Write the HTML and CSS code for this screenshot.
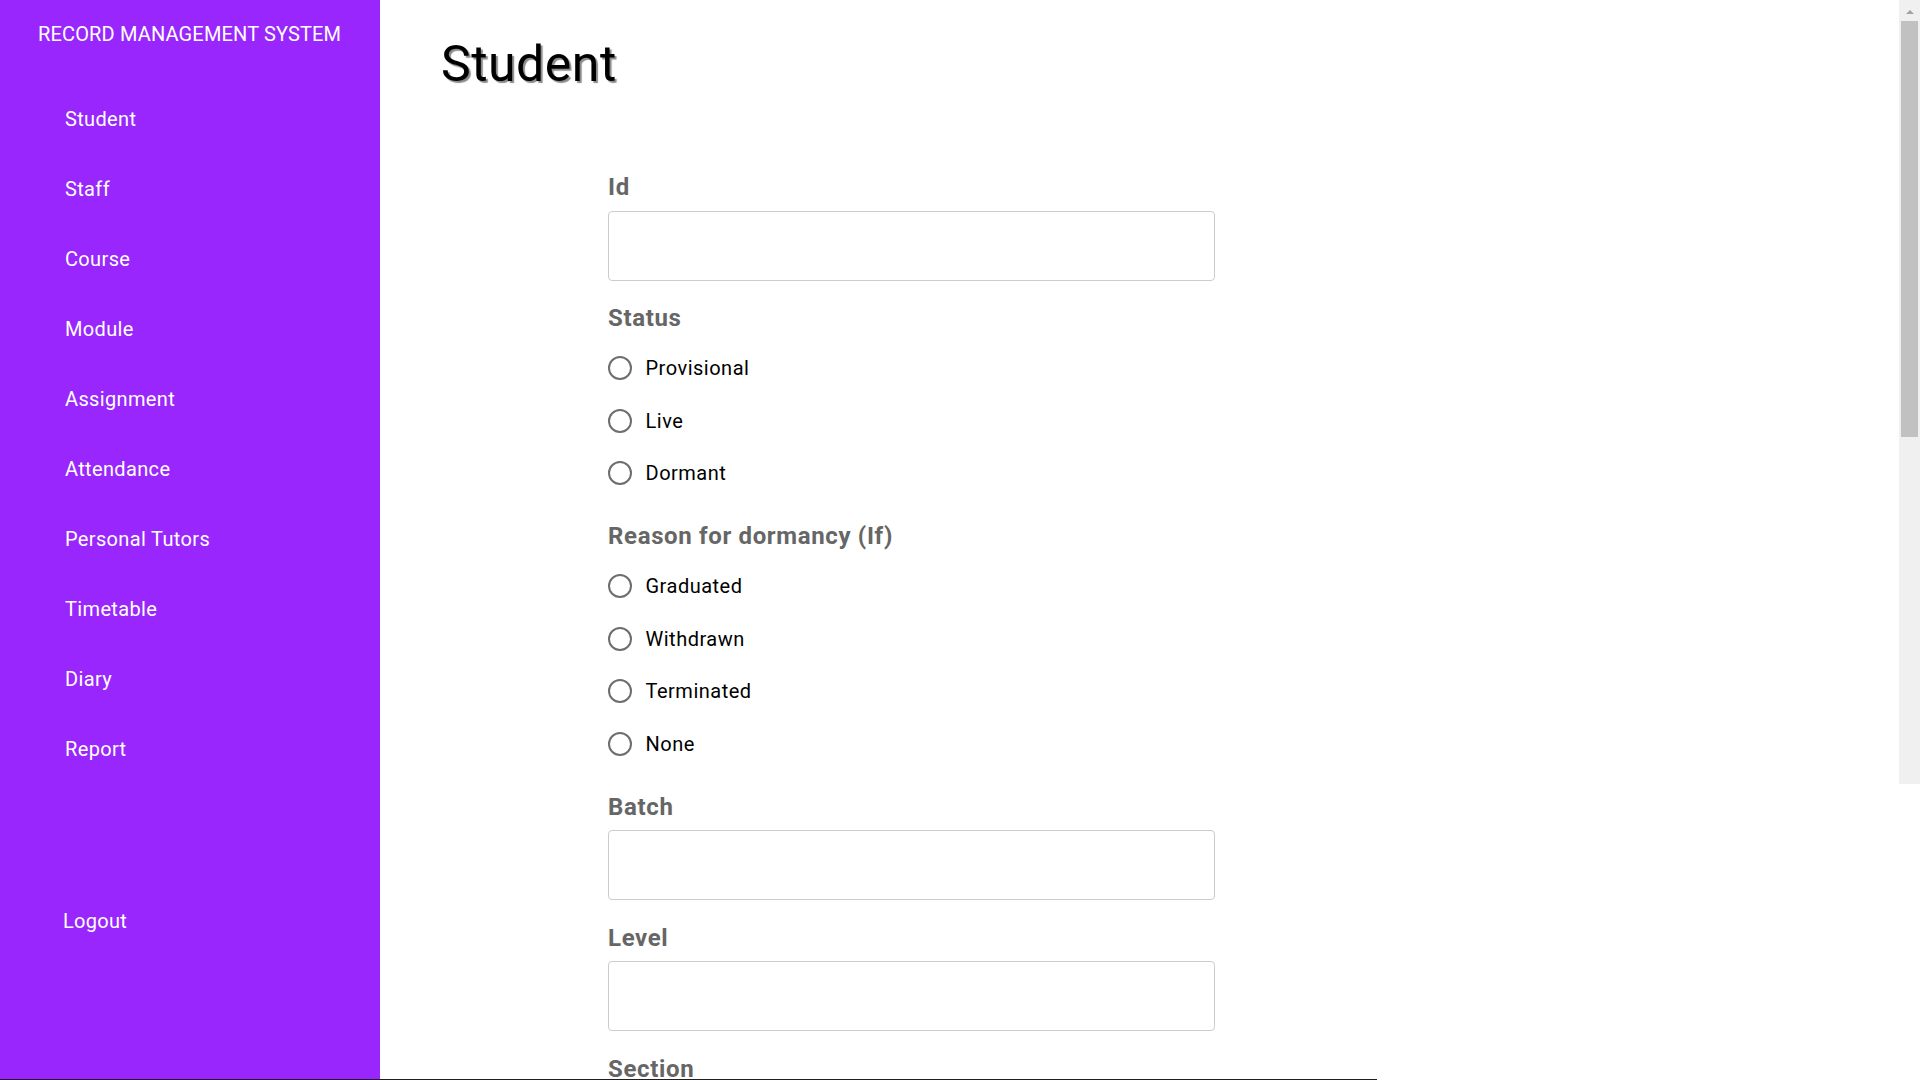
FILE: index.html
```html
<!DOCTYPE html>
<html lang="en">
<head>
<meta charset="utf-8">
<title>Record Management System - Student</title>
<link rel="stylesheet" href="styles.css">
</head>
<body>
<aside class="sidebar">
  <div class="brand">RECORD MANAGEMENT SYSTEM</div>
  <nav class="nav">
    <a class="nav-item" href="#">Student</a>
    <a class="nav-item" href="#">Staff</a>
    <a class="nav-item" href="#">Course</a>
    <a class="nav-item" href="#">Module</a>
    <a class="nav-item" href="#">Assignment</a>
    <a class="nav-item" href="#">Attendance</a>
    <a class="nav-item" href="#">Personal Tutors</a>
    <a class="nav-item" href="#">Timetable</a>
    <a class="nav-item" href="#">Diary</a>
    <a class="nav-item" href="#">Report</a>
  </nav>
  <a class="logout" href="#">Logout</a>
</aside>
<main class="main">
  <h1 class="page-title">Student</h1>
  <form class="form">
    <label class="field-label" for="sid">Id</label>
    <input class="text-input" id="sid" type="text">

    <div class="field-label">Status</div>
    <div class="radios">
      <label class="radio-row"><input class="radio" type="radio" name="status"><span class="radio-text">Provisional</span></label>
      <label class="radio-row"><input class="radio" type="radio" name="status"><span class="radio-text">Live</span></label>
      <label class="radio-row"><input class="radio" type="radio" name="status"><span class="radio-text">Dormant</span></label>
    </div>

    <div class="field-label">Reason for dormancy (If)</div>
    <div class="radios">
      <label class="radio-row"><input class="radio" type="radio" name="reason"><span class="radio-text">Graduated</span></label>
      <label class="radio-row"><input class="radio" type="radio" name="reason"><span class="radio-text">Withdrawn</span></label>
      <label class="radio-row"><input class="radio" type="radio" name="reason"><span class="radio-text">Terminated</span></label>
      <label class="radio-row"><input class="radio" type="radio" name="reason"><span class="radio-text">None</span></label>
    </div>

    <label class="field-label" for="batch">Batch</label>
    <input class="text-input" id="batch" type="text">

    <label class="field-label" for="level">Level</label>
    <input class="text-input" id="level" type="text">

    <label class="field-label" for="section">Section</label>
    <input class="text-input" id="section" type="text">
  </form>
</main>
<div class="scrollbar">
  <div class="scroll-arrow"></div>
  <div class="scroll-thumb"></div>
</div>
<div class="bottom-line"></div>
</body>
</html>
```

FILE: styles.css
```css
* { box-sizing: border-box; }

html, body {
  margin: 0;
  padding: 0;
  height: 100%;
}

body {
  display: flex;
  align-items: flex-start;
  overflow: hidden;
  background: #ffffff;
  font-family: Roboto, "Noto Sans", Arial, sans-serif;
  position: relative;
}

.sidebar {
  flex: 0 0 380px;
  width: 380px;
  height: 1079px;
  background: #9926fc;
  color: #ffffff;
  display: flex;
  flex-direction: column;
  padding-top: 20px;
}

.brand {
  font-size: 20px;
  line-height: 28px;
  padding-left: 38px;
  letter-spacing: 0.15px;
  white-space: nowrap;
}

.nav {
  display: flex;
  flex-direction: column;
  margin-top: 36px;
}

.nav-item {
  display: block;
  color: #ffffff;
  text-decoration: none;
  font-size: 20px;
  line-height: 70px;
  height: 70px;
  padding-left: 65px;
  letter-spacing: 0.35px;
}

.logout {
  display: block;
  color: #ffffff;
  text-decoration: none;
  font-size: 20px;
  line-height: 70px;
  height: 70px;
  padding-left: 63px;
  margin-top: 102px;
  letter-spacing: 0.3px;
}

.main {
  flex: 1;
  padding: 34px 0 0 61px;
}

.page-title {
  margin: 0;
  font-size: 50px;
  font-weight: 400;
  line-height: 60px;
  color: #000000;
  letter-spacing: 0.5px;
  text-shadow: 2px 2px 1px #8a8a8a;
}

.form {
  margin: 79px 0 0 167px;
  width: 606px;
  display: flex;
  flex-direction: column;
}

.field-label {
  display: block;
  font-size: 24px;
  font-weight: 700;
  line-height: 28px;
  color: #666666;
  letter-spacing: 0.65px;
  margin-bottom: 9.5px;
}

.text-input {
  display: block;
  width: 607px;
  height: 70px;
  border: 1px solid #cccccc;
  border-radius: 4px;
  background: #ffffff;
  margin: 0 0 23.5px 0;
  font-size: 20px;
  padding: 0 12px;
}

.radios {
  display: flex;
  flex-direction: column;
  margin: 0.5px 0 23.5px 0;
}

.radios + .field-label {
  margin-top: -1px;
}

.radio-row {
  display: flex;
  align-items: center;
  height: 52.5px;
}

.radio {
  appearance: none;
  -webkit-appearance: none;
  width: 24px;
  height: 24px;
  margin: 0 13.5px 0 0;
  border: 2px solid #6e6e6e;
  border-radius: 50%;
  background: #ffffff;
  flex: 0 0 24px;
}

.radio-text {
  font-size: 20px;
  line-height: 24px;
  color: #000000;
  letter-spacing: 0.5px;
}

.scrollbar {
  position: absolute;
  top: 0;
  right: 0;
  width: 21px;
  height: 784px;
  background: #f0f0f0;
  display: flex;
  flex-direction: column;
  align-items: center;
}

.scroll-arrow {
  margin-top: 10px;
  width: 0;
  height: 0;
  border-left: 4px solid transparent;
  border-right: 4px solid transparent;
  border-bottom: 4px solid #a3a3a3;
}

.scroll-thumb {
  margin-top: 7px;
  width: 17px;
  height: 416px;
  background: #c1c1c1;
}

.bottom-line {
  position: absolute;
  left: 0;
  top: 1079px;
  width: 1377px;
  height: 1px;
  background: #1e1e1e;
}
```
